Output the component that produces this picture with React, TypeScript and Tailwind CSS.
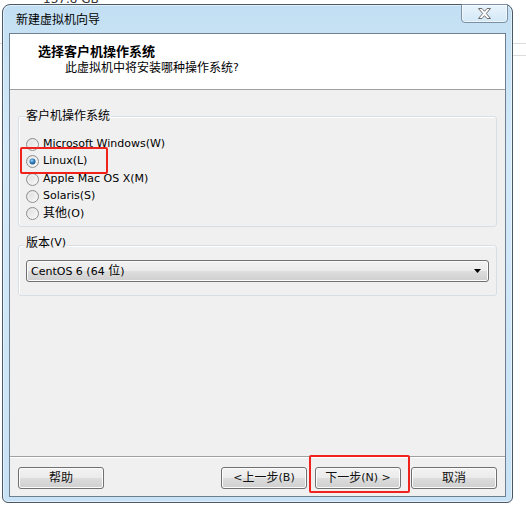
import React from "react";

const CJK = /([\u3400-\u9fff\uff00-\uffef]+)/;

function T({ s }: { s: string }) {
  const parts = s.split(CJK);
  return (
    <>
      {parts.map((p, i) =>
        CJK.test(p) ? (
          <span key={i} className="text-[12px]">
            {p}
          </span>
        ) : (
          <span key={i}>{p}</span>
        )
      )}
    </>
  );
}

function Radio({ checked }: { checked?: boolean }) {
  return (
    <svg width="13" height="13" viewBox="0 0 13 13" className="shrink-0">
      <defs>
        <linearGradient id="rg" x1="0" y1="0" x2="1" y2="1">
          <stop offset="0" stopColor="#d9d9d9" />
          <stop offset="1" stopColor="#fbfbfb" />
        </linearGradient>
        <radialGradient id="dot" cx="0.4" cy="0.35" r="0.7">
          <stop offset="0" stopColor="#a5d7f7" />
          <stop offset="0.5" stopColor="#2f7fc0" />
          <stop offset="1" stopColor="#1a4f7e" />
        </radialGradient>
      </defs>
      <circle cx="6.5" cy="6.5" r="6" fill="url(#rg)" stroke="#8e8f8f" strokeWidth="1" />
      <circle cx="6.5" cy="6.5" r="4.2" fill="none" stroke="#f4f4f4" strokeWidth="0.8" />
      {checked && <circle cx="6.5" cy="6.5" r="3" fill="url(#dot)" />}
    </svg>
  );
}

function Btn({ children, w }: { children: React.ReactNode; w: string }) {
  return (
    <div
      className={`${w} h-[22px] rounded-[3px] border border-[#707070] bg-[linear-gradient(to_bottom,#f2f2f2_0%,#ebebeb_50%,#dddddd_51%,#cfcfcf_100%)] shadow-[inset_0_0_0_1px_#fcfcfc] flex items-center justify-center text-[#111]`}
    >
      {children}
    </div>
  );
}

export default function App() {
  return (
    <div
      className="relative w-[526px] h-[509px] bg-white overflow-hidden text-[11px] text-black"
      style={{ fontFamily: "'DejaVu Sans', 'Noto Sans CJK SC', sans-serif" }}
    >
      {/* desktop background behind the window */}
      <div className="absolute left-[43px] top-[-10px] text-[12px] text-[#333]">137.8 GB</div>
      <div className="absolute left-0 right-0 top-[43px] h-px bg-[#dcdcdc]" />
      <div className="absolute left-[500px] right-0 top-[55px] h-px bg-[#dcdcdc]" />

      {/* window */}
      <div className="relative ml-[2px] mt-[4px] w-[511px] h-[499px] rounded-t-[8px] rounded-b-[6px] border border-[#4b5866] bg-[linear-gradient(to_bottom,#c3dff3,#d3eaf9_30%,#c8e2f5_100%)] shadow-[inset_0_0_0_1px_rgba(255,255,255,0.5)] flex flex-col px-[6px] pb-[5px]">
        {/* close button */}
        <div className="absolute right-[4px] top-[-1px] w-[47px] h-[19px] rounded-b-[4px] border border-[#7d8fa3] bg-[linear-gradient(to_bottom,#e9f4fc,#d3e8f7)] shadow-[inset_0_0_0_1px_rgba(255,255,255,0.6)] flex items-center justify-center">
          <svg width="15" height="11" viewBox="0 0 15 11">
            <path
              d="M1.5 0.5 H5 L7.5 3.3 L10 0.5 H13.5 L9.3 5.5 L13.5 10.5 H10 L7.5 7.7 L5 10.5 H1.5 L5.7 5.5 Z"
              fill="#ffffff"
              stroke="#6d6d6d"
              strokeWidth="1"
              strokeLinejoin="round"
            />
          </svg>
        </div>

        {/* title bar */}
        <div className="h-[28px] flex items-center pl-[7px] shrink-0">
          <span className="text-[12px] text-black" style={{ fontFamily: "'Noto Sans CJK SC', sans-serif" }}>
            新建虚拟机向导
          </span>
        </div>

        {/* client area */}
        <div className="h-[464px] border border-[#6f7f8f] bg-[#f0f0f0] flex flex-col">
          {/* header */}
          <div className="h-[56px] bg-white border-b border-[#a0a0a0] pl-[28px] pt-[8px] shrink-0">
            <div className="h-[17px] flex items-center text-[13px] font-bold" style={{ fontFamily: "'Noto Sans CJK SC', sans-serif" }}>
              选择客户机操作系统
            </div>
            <div className="h-[18px] flex items-center pl-[27px]">
              <T s="此虚拟机中将安装哪种操作系统?" />
            </div>
          </div>

          {/* body */}
          <div className="flex-1 flex flex-col px-[8px] pt-[26px]">
            {/* group 1 */}
            <div className="relative h-[111px] rounded-[3px] border border-[#d5dfe5] shadow-[inset_1px_1px_0_#ffffff] pl-[7px] pt-[19px]">
              <span className="absolute left-[6px] top-[-9px] h-[16px] px-[1px] bg-[#f0f0f0] flex items-center text-[12px]">
                客户机操作系统
              </span>
              <div className="flex flex-col">
                <div className="h-[17px] flex items-center gap-[4px]">
                  <Radio />
                  <span><T s="Microsoft Windows(W)" /></span>
                </div>
                <div className="h-[17px] flex items-center gap-[4px]">
                  <Radio checked />
                  <span><T s="Linux(L)" /></span>
                </div>
                <div className="h-[18px] flex items-center gap-[4px]">
                  <Radio />
                  <span><T s="Apple Mac OS X(M)" /></span>
                </div>
                <div className="h-[17px] flex items-center gap-[4px]">
                  <Radio />
                  <span><T s="Solaris(S)" /></span>
                </div>
                <div className="h-[17px] flex items-center gap-[4px]">
                  <Radio />
                  <span><T s="其他(O)" /></span>
                </div>
              </div>
            </div>

            {/* group 2 */}
            <div className="relative mt-[18px] h-[51px] rounded-[3px] border border-[#d5dfe5] shadow-[inset_1px_1px_0_#ffffff] px-[7px] pt-[14px]">
              <span className="absolute left-[6px] top-[-11px] h-[16px] px-[1px] bg-[#f0f0f0] flex items-center">
                <T s="版本(V)" />
              </span>
              <div className="h-[22px] rounded-[3px] border border-[#707070] bg-[linear-gradient(to_bottom,#f2f2f2_0%,#ebebeb_50%,#dddddd_51%,#cfcfcf_100%)] shadow-[inset_0_0_0_1px_#fcfcfc] flex items-center pl-[4px] pr-[7px]">
                <span className="flex-1">
                  <T s="CentOS 6 (64 位)" />
                </span>
                <svg width="7" height="4" viewBox="0 0 7 4">
                  <path d="M0 0 H7 L3.5 4 Z" fill="#000" />
                </svg>
              </div>
            </div>
          </div>

          {/* footer */}
          <div className="h-[40px] border-t border-[#a0a0a0] shadow-[inset_0_1px_0_#ffffff] flex items-start pt-[10px] px-[8px] shrink-0">
            <Btn w="w-[86px]">
              <T s="帮助" />
            </Btn>
            <div className="flex-1" />
            <Btn w="w-[86px]">
              <T s="< 上一步(B)" />
            </Btn>
            <div className="w-[8px]" />
            <Btn w="w-[86px]">
              <T s="下一步(N) >" />
            </Btn>
            <div className="w-[10px]" />
            <Btn w="w-[86px]">
              <T s="取消" />
            </Btn>
          </div>
        </div>
      </div>

      {/* red annotation boxes */}
      <div className="absolute left-[20px] top-[147px] w-[88px] h-[27px] border-2 border-[#f0231c] rounded-[2px]" />
      <div className="absolute left-[309px] top-[455px] w-[101px] h-[38px] border-2 border-[#f0231c] rounded-[2px]" />
    </div>
  );
}
